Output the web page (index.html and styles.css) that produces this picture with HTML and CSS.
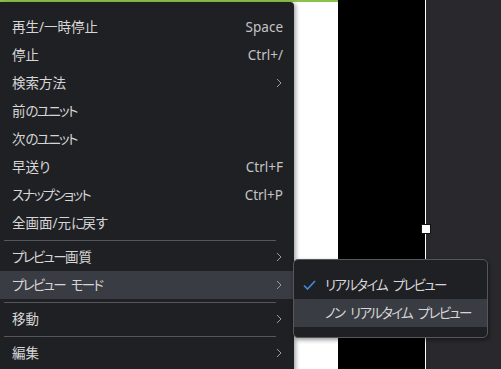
FILE: index.html
```html
<!DOCTYPE html>
<html lang="ja">
<head>
  <meta charset="UTF-8">
  <title>Preview menu</title>
  <link rel="stylesheet" href="styles.css">
</head>
<body>

  <div class="stage">
    <div class="canvas"></div>
    <div class="video"></div>
    <div class="guide"></div>
    <div class="side"></div>
  </div>

  <div class="handle"></div>

  <div class="menu">
    <div class="item"><span class="label">再生/一時停止</span><span class="key">Space</span></div>
    <div class="item"><span class="label">停止</span><span class="key">Ctrl+/</span></div>
    <div class="item"><span class="label">検索方法</span><svg class="chev" width="6" height="10" viewBox="0 0 6 10"><path d="M1 1l4 4-4 4" /></svg></div>
    <div class="item"><span class="label">前<span class="kana">のユニット</span></span></div>
    <div class="item"><span class="label">次<span class="kana">のユニット</span></span></div>
    <div class="item"><span class="label">早送<span class="kana">り</span></span><span class="key">Ctrl+F</span></div>
    <div class="item"><span class="label"><span class="kana">スナップショット</span></span><span class="key">Ctrl+P</span></div>
    <div class="item"><span class="label">全画面/元<span class="kana">に</span>戻<span class="kana">す</span></span></div>
    <div class="sep"></div>
    <div class="item"><span class="label"><span class="kana">プレビュー</span>画質</span><svg class="chev" width="6" height="10" viewBox="0 0 6 10"><path d="M1 1l4 4-4 4" /></svg></div>
    <div class="item active"><span class="label"><span class="kana">プレビュー モード</span></span><svg class="chev" width="6" height="10" viewBox="0 0 6 10"><path d="M1 1l4 4-4 4" /></svg></div>
    <div class="sep"></div>
    <div class="item"><span class="label">移動</span><svg class="chev" width="6" height="10" viewBox="0 0 6 10"><path d="M1 1l4 4-4 4" /></svg></div>
    <div class="sep"></div>
    <div class="item"><span class="label">編集</span><svg class="chev" width="6" height="10" viewBox="0 0 6 10"><path d="M1 1l4 4-4 4" /></svg></div>
  </div>

  <div class="submenu">
    <div class="sub-item">
      <svg class="check" width="13" height="10" viewBox="0 0 13 10"><path d="M1 5.5l3.5 3.5L12 1" /></svg>
      <span class="kana">リアルタイム プレビュー</span>
    </div>
    <div class="sub-item active">
      <span class="kana">ノン リアルタイム プレビュー</span>
    </div>
  </div>

</body>
</html>
```

FILE: styles.css
```css
body {
  margin: 0;
  width: 501px;
  height: 369px;
  overflow: hidden;
  position: relative;
  background: #28282d;
  font-family: "Noto Sans", "Noto Sans CJK JP", sans-serif;
  font-size: 13.5px;
  font-feature-settings: "palt";
  color: #d6d6d6;
}

.stage {
  display: flex;
  height: 369px;
}

.canvas {
  width: 338px;
  background: #fff;
  border-top: 2px solid #8bc34a;
}

.video {
  width: 87px;
  background: #000;
}

.guide {
  width: 1px;
  background: #fff;
}

.side {
  flex: 1;
  background: #28282d;
}

.handle {
  position: absolute;
  left: 421px;
  top: 224px;
  width: 8px;
  height: 8px;
  background: #fff;
  border: 1px solid #111;
}

.menu {
  position: absolute;
  left: 0;
  top: 2px;
  width: 294px;
  height: 380px;
  box-sizing: border-box;
  padding: 11px 11px 0 0;
  background: #1f2024;
  border-radius: 0 4px 0 0;
  box-shadow: 2px 1px 4px rgba(0, 0, 0, 0.35);
}

.item {
  display: flex;
  align-items: center;
  justify-content: space-between;
  height: 28px;
  padding-left: 12px;
  line-height: 1;
  white-space: nowrap;
}

.item .label {
  padding-top: 2px;
}

.kana {
  letter-spacing: -1.7px;
  word-spacing: 4px;
}

.item.active {
  background: #3a3c43;
  margin-right: -11px;
  padding-right: 11px;
}

.key {
  color: #c4c4c4;
  padding-top: 2px;
}

.chev {
  margin-right: 1px;
}

.chev path {
  fill: none;
  stroke: #9c9c9c;
  stroke-width: 1;
}

.sep {
  height: 1px;
  margin: 3px 7px 2px 4px;
  background: #55575c;
}

.submenu {
  position: absolute;
  left: 293px;
  top: 259px;
  width: 195px;
  box-sizing: border-box;
  padding: 11px 0 10px;
  background: #1f2024;
  border: 1px solid #55575c;
  border-radius: 5px;
  box-shadow: 1px 2px 4px rgba(0, 0, 0, 0.4);
}

.sub-item {
  position: relative;
  display: flex;
  align-items: center;
  height: 28px;
  padding-left: 31px;
  line-height: 1;
  white-space: nowrap;
}

.sub-item span {
  padding-top: 2px;
}

.sub-item.active {
  background: #3a3c43;
}

.check {
  position: absolute;
  left: 9px;
  top: 9px;
}

.check path {
  fill: none;
  stroke: #3d8fe0;
  stroke-width: 1.6;
}
```
